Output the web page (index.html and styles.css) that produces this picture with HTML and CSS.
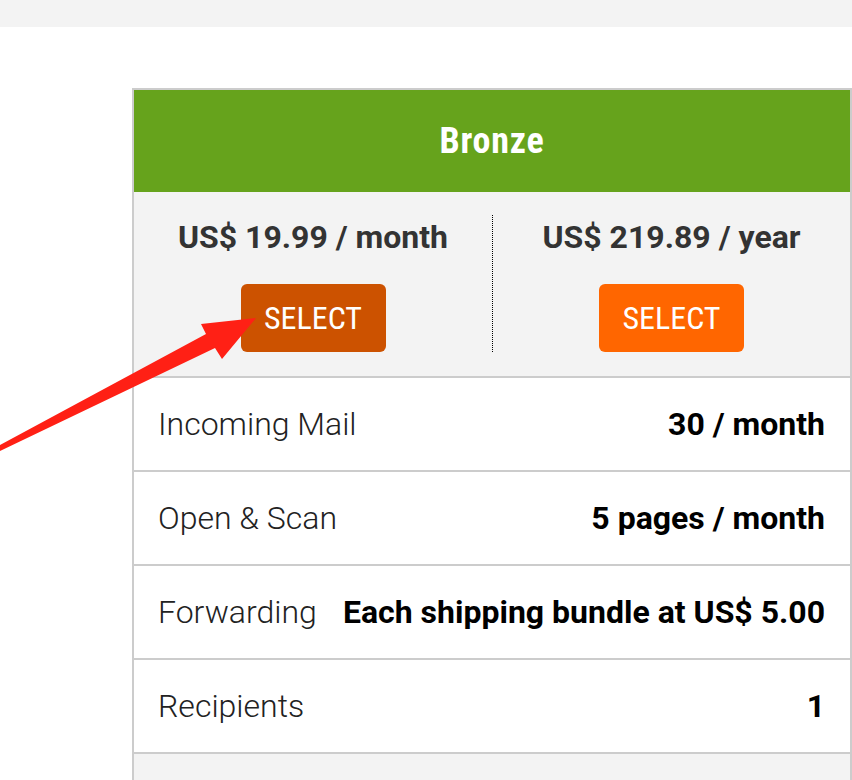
FILE: index.html
```html
<!DOCTYPE html>
<html>
<head>
<meta charset="utf-8">
<link rel="stylesheet" href="styles.css">
</head>
<body>
<div class="topbar"></div>
<div class="card">
  <div class="card-head">Bronze</div>
  <div class="prices">
    <div class="price-col">
      <div class="price">US$ 19.99 / month</div>
      <button class="btn btn-dark">SELECT</button>
    </div>
    <div class="price-col divided">
      <div class="price">US$ 219.89 / year</div>
      <button class="btn">SELECT</button>
    </div>
  </div>
  <div class="row"><span class="label">Incoming Mail</span><span class="value">30 / month</span></div>
  <div class="row"><span class="label">Open &amp; Scan</span><span class="value">5 pages / month</span></div>
  <div class="row"><span class="label">Forwarding</span><span class="value">Each shipping bundle at US$ 5.00</span></div>
  <div class="row"><span class="label">Recipients</span><span class="value">1</span></div>
  <div class="card-foot"></div>
</div>
<svg class="arrow" width="260" height="460" viewBox="0 0 260 460">
  <polygon points="-2,446 206,334 201,324 256,318 222,359 215,348 -2,452" fill="#ff2015"/>
</svg>
</body>
</html>
```
FILE: styles.css
```css
html, body {
  margin: 0;
  padding: 0;
  background: #ffffff;
  font-family: Roboto, "Liberation Sans", sans-serif;
  overflow: hidden;
}
.topbar {
  height: 27px;
  background: #f3f3f3;
}
.card {
  margin: 61px 0 0 132px;
  width: 720px;
  box-sizing: border-box;
  border: 2px solid #cccccc;
  border-bottom: none;
}
.card-head {
  height: 102px;
  background: #66a31c;
  color: #ffffff;
  font-size: 36px;
  font-weight: 700;
  font-stretch: 75%;
  letter-spacing: 0.8px;
  display: flex;
  align-items: center;
  justify-content: center;
}
.prices {
  background: #f3f3f3;
  display: grid;
  grid-template-columns: 1fr 1fr;
  padding: 23px 0 24px;
  border-bottom: 2px solid #cccccc;
}
.price-col {
  display: flex;
  flex-direction: column;
  align-items: center;
  height: 137px;
  box-sizing: border-box;
}
.price-col.divided {
  border-left: 1px dotted #000000;
}
.price {
  height: 44px;
  line-height: 44px;
  font-size: 32px;
  font-weight: 700;
  color: #333333;
}
.btn {
  margin-top: 25px;
  width: 145px;
  height: 68px;
  border: none;
  border-radius: 6px;
  background: #ff6600;
  color: #ffffff;
  font-family: Roboto, "Liberation Sans", sans-serif;
  font-stretch: 75%;
  font-size: 32px;
  font-weight: 400;
  padding: 0;
}
.btn-dark {
  background: #cc5200;
}
.row {
  height: 92px;
  border-bottom: 2px solid #cccccc;
  display: flex;
  align-items: center;
  justify-content: space-between;
  padding: 0 25px 0 24px;
}
.label {
  font-size: 32px;
  font-weight: 300;
  color: #222222;
}
.value {
  font-size: 32px;
  font-weight: 700;
  color: #000000;
}
.card-foot {
  height: 40px;
  background: #f3f3f3;
}
.arrow {
  position: absolute;
  left: 0;
  top: 0;
}
```
